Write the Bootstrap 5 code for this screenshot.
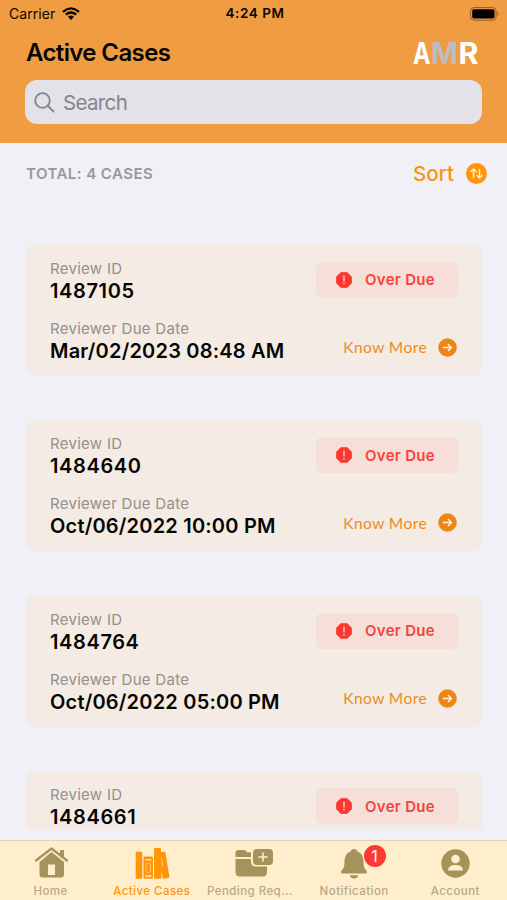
<!DOCTYPE html>
<html lang="en">
<head>
<meta charset="utf-8">
<meta name="viewport" content="width=device-width, initial-scale=1">
<title>Active Cases</title>
<link href="https://cdn.jsdelivr.net/npm/bootstrap@5.3.0/dist/css/bootstrap.min.css" rel="stylesheet">
<style>
body{background:#f1f0f6;font-family:Inter,"Liberation Sans",sans-serif;color:#080604;height:900px;overflow:hidden;line-height:1}
svg{display:block;flex:none}
.app-head{background:#f09c42;height:142.5px}
.status{height:27px;padding:0 7px 0 9px}
.status>div{flex:1 1 0}
.carrier{font-size:14px;letter-spacing:.05px}
.wifi{margin-left:7px}
.clock{font-size:13.5px;font-weight:600;letter-spacing:.55px;padding-top:1px;margin-right:-1px}
.title-row{height:53px;padding:0 28px 1px 26px}
.title-row h1{font-size:24px;font-weight:600;letter-spacing:-.62px;line-height:1}
.search-box{height:44px;margin:0 25px;background:#e4e2e9;border-radius:12px;color:#85848a;padding-left:9px;font-size:20.5px;letter-spacing:-.65px}
.search-box span{padding-top:2px}
.total-row{height:62px;padding:0 20px 0 26px}
.total-lbl{font-size:15px;font-weight:600;color:#98979d;letter-spacing:.45px}
.sort-lbl{font-size:20.5px;font-weight:500;color:#fb930c;padding-top:2px}
.sort-icon{margin-left:12px}
.case-list{height:585.5px;margin-top:39.5px;padding:0 25px 0 26px;overflow:hidden}
.case{height:131.5px;margin-bottom:44px;background:#f3ebe4;border-radius:9px;padding:15.6px 24px 0}
.k{font-size:15px;line-height:18px;color:#94908d;letter-spacing:.28px}
.v{font-size:20px;font-weight:600;line-height:26px;white-space:nowrap;letter-spacing:.2px}
.v-id{letter-spacing:.62px}
.due{width:142px;height:36px;margin-top:2px;background:#f5dfd8;border-radius:6px;color:#fb423a;font-size:15px;font-weight:600;letter-spacing:.3px;padding-left:20px;gap:13px}
.more{color:#ec8b1d;font-family:Lato,sans-serif;font-size:15.5px;letter-spacing:.42px;margin-top:40.4px;gap:11px;padding-right:1px}
.more span{padding-top:1px}
.tabs{height:60.5px;margin-top:10px;background:#feeecb;border-top:1px solid #dcd2bf;color:#a6925b}
.tabs>div{flex:0 0 101.2px;font-size:11.5px;font-weight:500;letter-spacing:.45px;padding-top:4px}
.tabs span{color:#b9a983;white-space:nowrap;margin-top:5px}
.tabs .on span{color:#ff9609}
.tabs .clipped{margin-left:-6px}
.count{position:absolute;left:60px;top:4px;width:22px;height:22px;border-radius:50%;background:#fc3932;color:#fff;font-size:16px;font-weight:400;letter-spacing:0;padding-top:1px}
</style>
<script src="https://cdn.jsdelivr.net/npm/bootstrap@5.3.0/dist/js/bootstrap.bundle.min.js"></script>
</head>
<body>
<svg width="0" height="0" class="position-absolute"><defs>
<symbol id="stop" viewBox="0 0 16 16"><path d="M5 .2h6L15.8 5v6L11 15.8H5L.2 11V5z" fill="#fb382f" stroke="#fb382f" stroke-width=".4" stroke-linejoin="round"/><path d="M8 4v5" stroke="#f9c4bb" stroke-width="1.5" stroke-linecap="round"/><circle cx="8" cy="11.6" r=".9" fill="#f9c4bb"/></symbol>
<symbol id="go" viewBox="0 0 19 19"><circle cx="9.5" cy="9.5" r="9.3" fill="#ec8717"/><path d="M5.2 9.5h8M10.3 6.4l3.2 3.1-3.2 3.1" fill="none" stroke="#fff3e4" stroke-width="1.4" stroke-linecap="round" stroke-linejoin="round"/></symbol>
</defs></svg>

<header class="app-head">
  <div class="status d-flex align-items-center">
    <div class="d-flex align-items-center"><span class="carrier">Carrier</span>
      <svg class="wifi" width="18" height="13" viewBox="0 0 18 13" fill="none" stroke="#080604" stroke-width="2.3"><path d="M1 4.8Q9-2 17 4.8M3.8 7.7Q9 3.4 14.2 7.7"/><path d="M6 9.8Q9 7.4 12 9.8L9 12.9z" fill="#080604" stroke="none"/></svg>
    </div>
    <span class="clock">4:24 PM</span>
    <div class="d-flex justify-content-end"><svg width="30" height="14" viewBox="0 0 30 14"><rect x=".6" y=".6" width="25.5" height="12.6" rx="3.4" fill="none" stroke="#8c5d2b"/><rect x="2.2" y="2.2" width="22.3" height="9.4" rx="1.8"/><path d="M27.5 4.8q2.1 2.1 0 4.2z" fill="#8c5d2b"/></svg></div>
  </div>
  <div class="title-row d-flex align-items-center justify-content-between">
    <h1 class="m-0">Active Cases</h1>
    <svg width="68" height="40" viewBox="0 0 68 40" font-family="Inter,sans-serif" font-size="30" font-weight="700" role="img" aria-label="AMR">
      <text x="2" y="30.500" textLength="17.500" lengthAdjust="spacingAndGlyphs" fill="#fff">A</text>
      <text x="20" y="30.500" textLength="27" lengthAdjust="spacingAndGlyphs" fill="#bdbcc0">M</text>
      <text x="47.500" y="30.500" textLength="20" lengthAdjust="spacingAndGlyphs" fill="#fff">R</text>
    </svg>
  </div>
  <div class="search-box d-flex align-items-center gap-2">
    <svg width="21" height="21" viewBox="0 0 21 21" fill="none" stroke="#85848a" stroke-width="1.8" stroke-linecap="round"><circle cx="8.5" cy="8.5" r="7.3"/><path d="M14 14l5.5 5.5"/></svg>
    <span>Search</span>
  </div>
</header>

<main>
  <div class="total-row d-flex align-items-center justify-content-between">
    <span class="total-lbl">TOTAL: 4 CASES</span>
    <div class="d-flex align-items-center"><span class="sort-lbl">Sort</span>
      <svg class="sort-icon" width="21" height="21" viewBox="0 0 21 21"><circle cx="10.5" cy="10.5" r="10.5" fill="#ff960b"/><path d="M7.5 14.5V6M5 8.5L7.5 6 10 8.5M13.5 6.5V15M11 12.5l2.5 2.5 2.5-2.5" fill="none" stroke="#fff0dc" stroke-width="1.5" stroke-linecap="round" stroke-linejoin="round"/></svg>
    </div>
  </div>
  <div class="case-list">
    <section class="case d-flex justify-content-between">
      <div><div class="k">Review ID</div><div class="v v-id">1487105</div><div class="k mt-3">Reviewer Due Date</div><div class="v">Mar/02/2023 08:48 AM</div></div>
      <div><div class="due d-flex align-items-center"><svg width="16" height="16"><use href="#stop"/></svg>Over Due</div><div class="more d-flex align-items-center justify-content-end"><span>Know More</span><svg width="19" height="19"><use href="#go"/></svg></div></div>
    </section>
    <section class="case d-flex justify-content-between">
      <div><div class="k">Review ID</div><div class="v v-id">1484640</div><div class="k mt-3">Reviewer Due Date</div><div class="v">Oct/06/2022 10:00 PM</div></div>
      <div><div class="due d-flex align-items-center"><svg width="16" height="16"><use href="#stop"/></svg>Over Due</div><div class="more d-flex align-items-center justify-content-end"><span>Know More</span><svg width="19" height="19"><use href="#go"/></svg></div></div>
    </section>
    <section class="case d-flex justify-content-between">
      <div><div class="k">Review ID</div><div class="v v-id">1484764</div><div class="k mt-3">Reviewer Due Date</div><div class="v">Oct/06/2022 05:00 PM</div></div>
      <div><div class="due d-flex align-items-center"><svg width="16" height="16"><use href="#stop"/></svg>Over Due</div><div class="more d-flex align-items-center justify-content-end"><span>Know More</span><svg width="19" height="19"><use href="#go"/></svg></div></div>
    </section>
    <section class="case d-flex justify-content-between">
      <div><div class="k">Review ID</div><div class="v v-id">1484661</div></div>
      <div><div class="due d-flex align-items-center"><svg width="16" height="16"><use href="#stop"/></svg>Over Due</div></div>
    </section>
  </div>
</main>

<nav class="tabs d-flex">
  <div class="d-flex flex-column align-items-center"><svg width="36" height="36" viewBox="0 0 36 36"><path d="M3 15.5L18.500 3.500 34 15.500" fill="none" stroke="currentColor" stroke-width="2.300" stroke-linecap="round" stroke-linejoin="round"/><path d="M27 5h4v7.500l-4-3z" fill="currentColor"/><path fill-rule="evenodd" d="M18.500 7L31 17v12.500q0 3-3 3H9.500q-3 0-3-3V17zM15 19.500v10.500h7V19.500z" fill="currentColor"/></svg><span>Home</span></div>
  <div class="on d-flex flex-column align-items-center"><svg width="36" height="36" viewBox="0 0 36 36" fill="#ff9609"><rect x="1.700" y="6.800" width="6.600" height="27" rx="1.200"/><rect x="9.500" y="11.500" width="9.500" height="22.300" rx="1.500"/><path d="M11.800 14.800h5M11.800 31h5" stroke="#feeecb" stroke-width="1.300" stroke-linecap="round"/><rect x="12" y="18" width="4.500" height="9.500" rx="1.800" fill="none" stroke="#fbd08b" stroke-width=".8"/><path d="M21.200 3h4.600q1.200 0 1.200 1.200v2.900l3.100-.4q1.200-.1 1.400 1l3.900 23.700q.2 1.300-1 1.500l-4.600.6q-1 .1-1.200-1l-1.100-7v7q0 1.300-1.200 1.300h-5.100q-1.200 0-1.200-1.200V4.200Q20 3 21.200 3z"/><path d="M27.300 12l1.400 9.500" stroke="#feeecb" stroke-width=".6"/></svg><span>Active Cases</span></div>
  <div class="d-flex flex-column align-items-center"><svg width="40" height="36" viewBox="0 0 40 36" fill="currentColor"><path d="M2.500 12V8q0-3 3-3h5q1.500 0 2.500 1l1.200 1.200H18V12zM2.500 14H18v2.500q0 5 5 5h11V27q0 4.500-4.500 4.500H7Q2.500 31.500 2.500 27z"/><rect x="20" y="4" width="20" height="16" rx="4"/><path d="M30 8v8M26 12h8" stroke="#feeecb" stroke-width="1.600" stroke-linecap="round"/></svg><span class="clipped">Pending Req...</span></div>
  <div class="d-flex flex-column align-items-center position-relative"><svg width="36" height="36" viewBox="0 0 36 36" fill="currentColor"><path d="M18 4c2 0 3 1 3.400 2.500C26 8 27.500 12 27.500 17c0 5 1.500 7 3.200 9 .8 1 .3 2.500-1.200 2.500h-23C5 28.500 4.500 27 5.300 26c1.700-2 3.200-4 3.200-9C8.500 12 10 8 14.600 6.500 15 5 16 4 18 4zM13.700 30.200h8.600q-1 3.300-4.300 3.300t-4.300-3.300z"/></svg><b class="count d-flex align-items-center justify-content-center">1</b><span>Notification</span></div>
  <div class="d-flex flex-column align-items-center"><svg width="36" height="36" viewBox="0 0 36 36"><circle cx="18.500" cy="18.500" r="14.200" fill="currentColor"/><circle cx="18.500" cy="14" r="4.300" fill="#feeecb"/><path d="M11 25.500q0-5.500 7.500-5.500t7.500 5.500z" fill="#feeecb"/></svg><span>Account</span></div>
</nav>
</body>
</html>
